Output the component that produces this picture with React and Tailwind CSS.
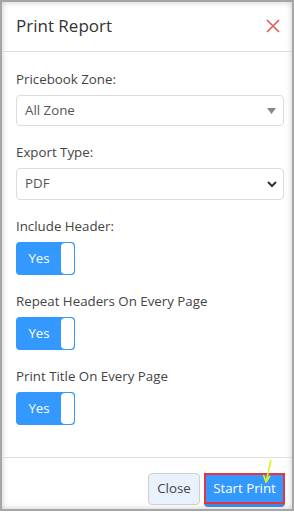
import React from 'react';

function Toggle() {
  return (
    <div className="flex h-[33px] w-[59px] rounded-[4px] bg-[#3399ff] overflow-hidden">
      <div className="flex flex-1 items-center justify-center pl-[1px] text-[13.3px] text-white">Yes</div>
      <div className="my-[1px] mr-[1px] w-[13px] rounded-[4px] bg-white"></div>
    </div>
  );
}

function Field({ label, children, className = '' }) {
  return (
    <div className={className}>
      <div className="text-[13.3px] leading-5 text-[#444]">{label}</div>
      <div className="mt-[6px]">{children}</div>
    </div>
  );
}

export default function App() {
  return (
    <div className="relative h-[515px] w-[294px] bg-white" style={{ fontFamily: '"Open Sans", "Noto Sans", sans-serif' }}>
      <div className="flex h-[511px] flex-col border-2 border-[#a6a6a6] bg-white shadow-[inset_0_0_6px_rgba(0,0,0,0.22)]">
        {/* header */}
        <div className="flex h-[50px] items-center justify-between border-b border-[#dedede] pb-[2px] pl-[14px] pr-[12px]">
          <h1 className="text-[17px] text-[#333]">Print Report</h1>
          <svg width="14" height="14" viewBox="0 0 14 14">
            <path d="M1 1 L13 13 M13 1 L1 13" stroke="#e05a5a" strokeWidth="1.6" />
          </svg>
        </div>

        {/* body */}
        <div className="flex-1 pl-[14px] pr-[8px] pt-[17px]">
          <Field label="Pricebook Zone:">
            <div className="flex h-[31px] items-center justify-between rounded-[4px] border border-[#dcdcdc] pl-[8px] pr-[7px] text-[13.3px] text-[#555]">
              <span>All Zone</span>
              <svg width="9" height="6" viewBox="0 0 9 6"><path d="M0 0 H9 L4.5 6 Z" fill="#888" /></svg>
            </div>
          </Field>
          <Field label="Export Type:" className="mt-[16px]">
            <div className="flex h-[32px] items-center justify-between rounded-[4px] border border-[#dcdcdc] pl-[8px] pr-[6px] text-[13.3px] text-[#555]">
              <span>PDF</span>
              <svg width="10" height="7" viewBox="0 0 10 7"><path d="M1 1 L5 5 L9 1" fill="none" stroke="#333" strokeWidth="2" /></svg>
            </div>
          </Field>
          <Field label="Include Header:" className="mt-[16px]">
            <Toggle />
          </Field>
          <Field label="Repeat Headers On Every Page" className="mt-[16px]">
            <Toggle />
          </Field>
          <Field label="Print Title On Every Page" className="mt-[16px]">
            <Toggle />
          </Field>
        </div>

        {/* footer */}
        <div className="flex h-[52px] items-start justify-end gap-[4px] border-t border-[#dedede] pr-[7px] pt-[15px]">
          <button className="h-[32px] w-[52px] rounded-[4px] border border-[#cfcfcf] bg-[#e9f2fc] text-[13.3px] text-[#444]">Close</button>
          <div className="rounded-b-[4px] shadow-[0_3px_0_#3a8be0]">
            <button className="h-[31px] w-[81px] border-2 border-[#e8343f] bg-[#3399ff] text-[13.3px] text-white">Start Print</button>
          </div>
        </div>
      </div>

      {/* annotation arrow */}
      <svg className="absolute left-[260px] top-[458px]" width="16" height="28" viewBox="0 0 16 28">
        <path d="M11 2 L6.5 22" stroke="#e4ee1a" strokeWidth="1.6" fill="none" />
        <path d="M3.5 17 L6 24 L10 18" stroke="#e4ee1a" strokeWidth="1.6" fill="none" />
      </svg>
    </div>
  );
}
